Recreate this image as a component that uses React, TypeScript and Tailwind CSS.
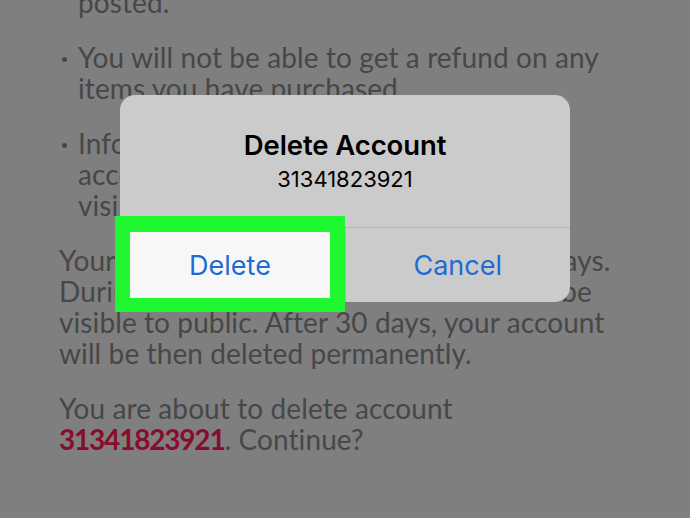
import React from "react";

const body = { fontFamily: "Lato, 'Open Sans', sans-serif" };
const ios = { fontFamily: "Inter, 'Liberation Sans', sans-serif" };

function Line({ children }: { children: React.ReactNode }) {
  return <div className="h-[31px] whitespace-nowrap">{children}</div>;
}

function Bullet({ lines }: { lines: string[] }) {
  return (
    <div className="flex">
      <div className="w-[19px] pl-[3px] h-[31px] flex items-center">
        <span className="block w-[5px] h-[5px] rounded-full bg-[#474747] mt-[3px]" />
      </div>
      <div>
        {lines.map((l, i) => (
          <Line key={i}>{l}</Line>
        ))}
      </div>
    </div>
  );
}

export default function App() {
  return (
    <div className="relative w-[690px] h-[518px] overflow-hidden bg-[#7f7f7f]">
      <div
        className="flex flex-col gap-[24px] pl-[59px] mt-[-13px] text-[28px] leading-[31px] tracking-[0.1px] text-[#474747]"
        style={body}
      >
        <div className="pl-[19px]">
          <Line>posted.</Line>
        </div>
        <Bullet lines={["You will not be able to get a refund on any", "items you have purchased."]} />
        <Bullet
          lines={[
            "Information you shared with other",
            "accounts, such as messages, will be",
            "visible to them.",
          ]}
        />
        <div>
          <Line>Your account will be deactivated for 30 days.</Line>
          <Line>During this period, your account will not be</Line>
          <Line>visible to public. After 30 days, your account</Line>
          <Line>will be then deleted permanently.</Line>
        </div>
        <div>
          <Line>You are about to delete account</Line>
          <Line>
            <span className="font-bold tracking-[-1.2px] text-[#8a0c2c]">31341823921</span>. Continue?
          </Line>
        </div>
      </div>

      {/* Alert dialog */}
      <div
        className="absolute left-[120px] top-[95px] w-[450px] h-[207px] rounded-[15px] bg-[#cbcbcb] flex flex-col overflow-hidden"
        style={ios}
      >
        <div className="h-[133px] flex flex-col items-center pt-[34px] border-b border-[#b4b4b4]">
          <div className="text-[27.5px] leading-[32px] font-semibold text-black tracking-[-0.1px]">
            Delete Account
          </div>
          <div className="text-[22px] leading-[26px] mt-[5px] text-black">31341823921</div>
        </div>
        <div className="flex-1 flex">
          <div className="flex-1 flex items-center justify-center pt-[3px] border-r border-[#b4b4b4] text-[27px] text-[#1d6bd4]">
            Delete
          </div>
          <div className="flex-1 flex items-center justify-center pt-[3px] text-[27px] text-[#1d6bd4]">
            Cancel
          </div>
        </div>
      </div>

      {/* Green highlight */}
      <div
        className="absolute left-[115px] top-[216px] w-[230px] h-[96px] border-[15px] border-t-[16px] border-b-[14px] border-[#1ff730] bg-[#f7f7f8] flex items-center justify-center pt-[3px] text-[27px] text-[#1d6bd4]"
        style={ios}
      >
        Delete
      </div>
    </div>
  );
}
